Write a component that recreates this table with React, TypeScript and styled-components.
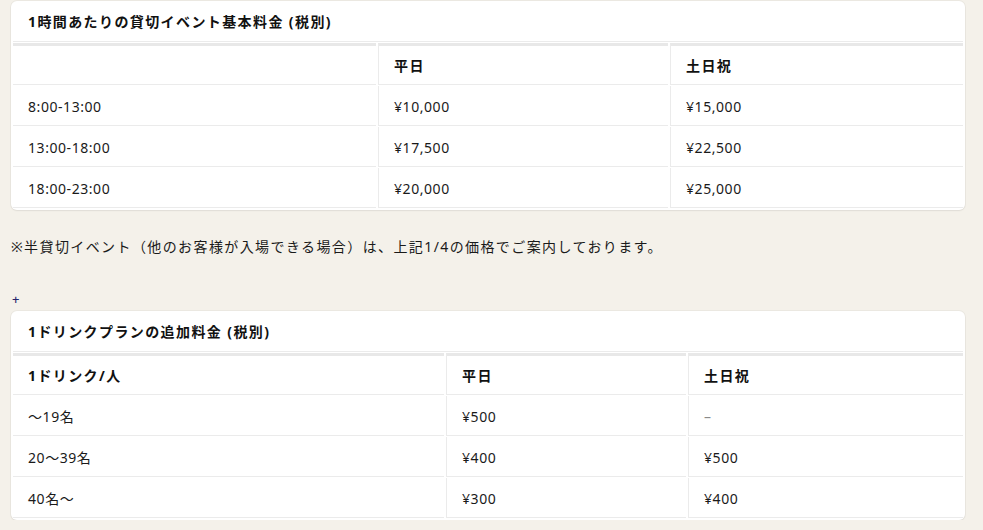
import React from 'react';
import styled, { createGlobalStyle } from 'styled-components';

const GlobalStyle = createGlobalStyle`
  html, body {
    margin: 0;
    padding: 0;
    background: #f4f1ea;
  }
  body {
    font-family: "Noto Sans", "Noto Sans CJK JP", sans-serif;
    color: #1a1a1a;
  }
`;

const Page = styled.div`
  display: flex;
  flex-direction: column;
  padding: 1px 18px 0 11px;
`;

const Card = styled.section<{ $gap?: number }>`
  background: #fff;
  border-radius: 6px;
  box-shadow: 0 0 0 1px rgba(0, 0, 0, 0.035), 0 1px 2px rgba(0, 0, 0, 0.05);
  margin-top: ${(p) => p.$gap ?? 0}px;
  overflow: hidden;
`;

const CardTitle = styled.h3`
  margin: 0 2px;
  height: 40px;
  display: flex;
  align-items: center;
  padding-left: 15px;
  font-size: 14px;
  font-weight: 700;
  letter-spacing: 0.1em;
  color: #111;
  border-bottom: 1px solid #ebebeb;
`;

const Table = styled.table`
  width: 100%;
  table-layout: fixed;
  border-collapse: separate;
  border-spacing: 2px 1px;
  margin-bottom: 1px;
`;

const Head = styled.th`
  height: 38px;
  padding: 0 0 0 15px;
  text-align: left;
  font-size: 14px;
  font-weight: 700;
  letter-spacing: 0.1em;
  color: #111;
  border-top: 3px solid #e8e8e8;
  border-bottom: 1px solid #ebebeb;
  & + & {
    border-left: 1px solid #ebebeb;
  }
`;

const Cell = styled.td<{ $muted?: boolean }>`
  height: 37px;
  padding: 2px 0 0 15px;
  font-size: 14px;
  line-height: 20px;
  letter-spacing: 0.04em;
  color: ${(p) => (p.$muted ? '#8a8a8a' : '#1a1a1a')};
  border-bottom: 1px solid #ebebeb;
  & + & {
    border-left: 1px solid #ebebeb;
  }
`;

const Note = styled.p`
  margin: 27px 0 0;
  font-size: 14px;
  line-height: 20px;
  letter-spacing: 0.1em;
  color: #1a1a1a;
`;

const Plus = styled.div`
  margin-top: 34px;
  font-size: 13px;
  font-weight: 500;
  line-height: 16px;
  color: #25246b;
  padding-left: 1px;
`;

type PriceTableProps = {
  title: string;
  widths: number[];
  head: string[];
  rows: string[][];
  gap?: number;
};

function PriceTable({ title, widths, head, rows, gap }: PriceTableProps) {
  return (
    <Card $gap={gap}>
      <CardTitle>{title}</CardTitle>
      <Table>
        <colgroup>
          {widths.map((w, i) => (
            <col key={i} style={{ width: w }} />
          ))}
        </colgroup>
        <thead>
          <tr>
            {head.map((h, i) => (
              <Head key={i}>{h}</Head>
            ))}
          </tr>
        </thead>
        <tbody>
          {rows.map((r, i) => (
            <tr key={i}>
              {r.map((c, j) => (
                <Cell key={j} $muted={c === '–'}>
                  {c}
                </Cell>
              ))}
            </tr>
          ))}
        </tbody>
      </Table>
    </Card>
  );
}

function App() {
  return (
    <Page>
      <GlobalStyle />
      <PriceTable
        title="1時間あたりの貸切イベント基本料金 (税別)"
        widths={[363, 290, 293]}
        head={['', '平日', '土日祝']}
        rows={[
          ['8:00-13:00', '¥10,000', '¥15,000'],
          ['13:00-18:00', '¥17,500', '¥22,500'],
          ['18:00-23:00', '¥20,000', '¥25,000'],
        ]}
      />
      <Note>※半貸切イベント（他のお客様が入場できる場合）は、上記1/4の価格でご案内しております。</Note>
      <Plus>+</Plus>
      <PriceTable
        gap={4}
        title="1ドリンクプランの追加料金 (税別)"
        widths={[431, 240, 275]}
        head={['1ドリンク/人', '平日', '土日祝']}
        rows={[
          ['〜19名', '¥500', '–'],
          ['20〜39名', '¥400', '¥500'],
          ['40名〜', '¥300', '¥400'],
        ]}
      />
    </Page>
  );
}

export default App;
